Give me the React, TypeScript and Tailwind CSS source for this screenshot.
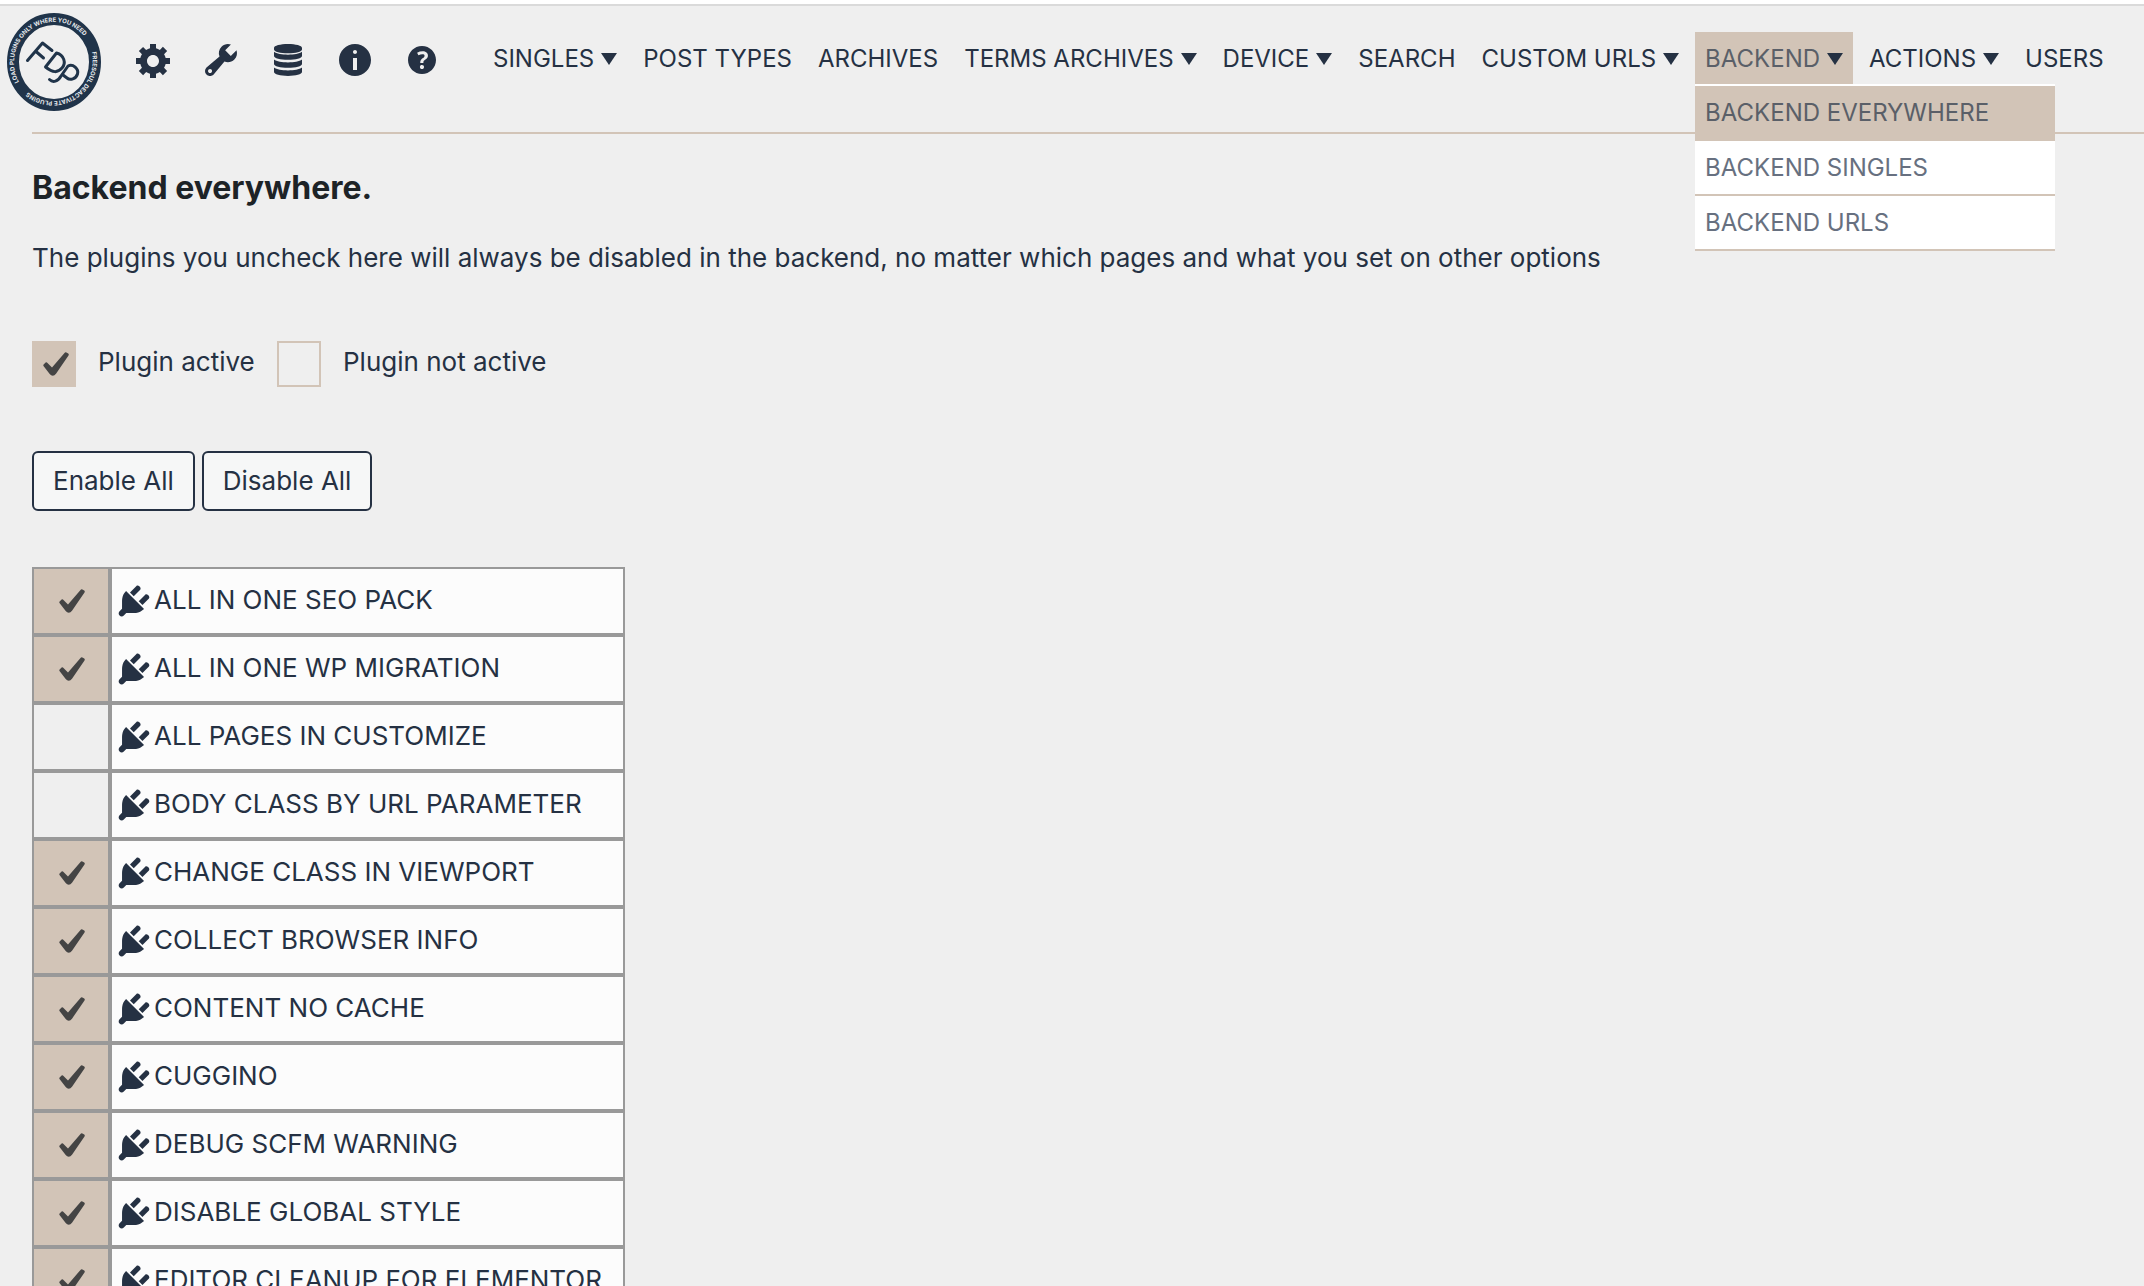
import React, { useState } from 'react';

interface IconProps {
  className?: string;
}

interface NavItem {
  label: string;
  hasMenu?: boolean;
  active?: boolean;
}

interface Plugin {
  name: string;
  enabled: boolean;
}

const navItems: NavItem[] = [
  { label: 'SINGLES', hasMenu: true },
  { label: 'POST TYPES' },
  { label: 'ARCHIVES' },
  { label: 'TERMS ARCHIVES', hasMenu: true },
  { label: 'DEVICE', hasMenu: true },
  { label: 'SEARCH' },
  { label: 'CUSTOM URLS', hasMenu: true },
  { label: 'BACKEND', hasMenu: true, active: true },
  { label: 'ACTIONS', hasMenu: true },
  { label: 'USERS' },
];

const backendMenu = ['BACKEND EVERYWHERE', 'BACKEND SINGLES', 'BACKEND URLS'];

const initialPlugins: Plugin[] = [
  { name: 'ALL IN ONE SEO PACK', enabled: true },
  { name: 'ALL IN ONE WP MIGRATION', enabled: true },
  { name: 'ALL PAGES IN CUSTOMIZE', enabled: false },
  { name: 'BODY CLASS BY URL PARAMETER', enabled: false },
  { name: 'CHANGE CLASS IN VIEWPORT', enabled: true },
  { name: 'COLLECT BROWSER INFO', enabled: true },
  { name: 'CONTENT NO CACHE', enabled: true },
  { name: 'CUGGINO', enabled: true },
  { name: 'DEBUG SCFM WARNING', enabled: true },
  { name: 'DISABLE GLOBAL STYLE', enabled: true },
  { name: 'EDITOR CLEANUP FOR ELEMENTOR', enabled: true },
];

const toolIcons = [
  {
    label: 'Settings',
    path: 'M18 12h-2.18c-.17.7-.44 1.35-.81 1.93l1.54 1.54-2.1 2.1-1.54-1.54c-.58.36-1.23.63-1.91.79V19H8v-2.18c-.68-.16-1.33-.43-1.91-.79l-1.54 1.54-2.12-2.12 1.54-1.54c-.36-.58-.63-1.23-.79-1.91H1V9.03h2.17c.16-.7.44-1.35.8-1.94L2.43 5.55l2.1-2.1 1.54 1.54c.58-.37 1.24-.64 1.93-.81V2h3v2.18c.68.16 1.33.43 1.91.79l1.54-1.54 2.12 2.12-1.54 1.54c.36.59.64 1.24.8 1.94H18V12zm-8.5 1.5c1.66 0 3-1.34 3-3s-1.34-3-3-3-3 1.34-3 3 1.34 3 3 3z',
  },
  {
    label: 'Tools',
    path: 'M16.68 9.77c-1.34 1.34-3.3 1.67-4.95.99l-5.41 6.52c-.99.99-2.59.99-3.58 0s-.99-2.59 0-3.57l6.52-5.42c-.68-1.65-.35-3.61.99-4.95 1.28-1.28 3.12-1.62 4.72-1.06l-2.89 2.89 2.82 2.82 2.86-2.87c.53 1.58.18 3.39-1.08 4.65zM3.81 16.21c.4.39 1.04.39 1.43 0 .4-.4.4-1.04 0-1.43-.39-.4-1.03-.4-1.43 0-.39.39-.39 1.03 0 1.43z',
  },
  {
    label: 'Database',
    path: 'M10 2c3.9 0 7 .85 7 1.95v.75C17 5.8 13.9 6.65 10 6.65S3 5.8 3 4.7v-.75C3 2.85 6.1 2 10 2zM3 5.9c1.3.95 4 1.45 7 1.45s5.7-.5 7-1.45V8c0 1.1-3.1 1.9-7 1.9S3 9.1 3 8zM3 9.8c1.3.95 4 1.45 7 1.45s5.7-.5 7-1.45V12c0 1.1-3.1 1.9-7 1.9S3 13.1 3 12zM3 13.8c1.3.95 4 1.45 7 1.45s5.7-.5 7-1.45v2.25C17 17.15 13.9 18 10 18s-7-.85-7-1.95z',
  },
  {
    label: 'Info',
    path: 'M10 2c4.42 0 8 3.58 8 8s-3.58 8-8 8-8-3.58-8-8 3.58-8 8-8zm1 4c0-.55-.45-1-1-1s-1 .45-1 1 .45 1 1 1 1-.45 1-1zm0 9V9H9v6h2z',
  },
  {
    label: 'Help',
    path: 'M17 10c0-3.87-3.14-7-7-7-3.87 0-7 3.13-7 7s3.13 7 7 7c3.86 0 7-3.13 7-7zm-6.3 1.48H9.14v-.43c0-.38.08-.7.24-.98s.46-.57.88-.89c.41-.29.68-.53.81-.71.14-.18.2-.39.2-.62 0-.25-.09-.44-.28-.58-.19-.13-.45-.19-.79-.19-.58 0-1.25.19-2 .57l-.64-1.28c.87-.49 1.8-.74 2.77-.74.81 0 1.45.2 1.92.58.48.39.71.91.71 1.55 0 .43-.09.8-.29 1.11-.19.32-.57.67-1.11 1.06-.38.28-.61.49-.71.63-.1.15-.15.34-.15.57v.35zm-1.47 2.74c-.18-.17-.27-.42-.27-.73 0-.33.08-.58.26-.75s.43-.25.77-.25c.32 0 .57.09.75.26s.27.42.27.74c0 .3-.09.55-.27.72-.18.18-.43.27-.75.27-.33 0-.58-.09-.76-.26z',
  },
];

const PlugIcon: React.FC<IconProps> = ({ className = '' }) => (
  <svg className={className} viewBox="0 0 20 20" fill="currentColor" aria-hidden="true">
    <path d="M13.11 4.36L9.87 7.6 8 5.73l3.24-3.24c.35-.34 1.05-.2 1.56.32.52.51.66 1.21.31 1.55zm-8 1.77l.91-1.12 9.01 9.01-1.19.84c-.71.71-2.63 1.16-3.82 1.16H6.14L4.9 17.26c-.59.59-1.54.59-2.12 0-.59-.58-.59-1.53 0-2.12l1.24-1.24v-3.88c0-1.13.4-3.19 1.09-3.89zm7.26 3.97l3.24-3.24c.34-.35 1.04-.21 1.55.31.52.51.66 1.21.31 1.55l-3.24 3.25z" />
  </svg>
);

const CheckMark: React.FC<IconProps> = ({ className = '' }) => (
  <svg className={className} viewBox="0 0 26 24" fill="#444" aria-hidden="true">
    <path d="M.6 12.4 2.6 10.6Q3.6 10 4.5 10.9L9 15.4 21.5.9Q22.4 0 23.4.6L25.2 1.6Q26.2 2.3 25.5 3.4L13 21.7Q11.5 23.8 9.8 23.8T6.7 22L.5 13.9Q0 13.1.6 12.4z" />
  </svg>
);

const Caret: React.FC = () => (
  <svg className="h-3 w-4" viewBox="0 0 16 12" fill="#253143" aria-hidden="true">
    <path d="M0 0h16L8 12z" />
  </svg>
);

const Logo: React.FC = () => (
  <svg className="h-[98px] w-[94px] shrink-0" viewBox="0 0 94 98" role="img" aria-label="FDP">
    <defs>
      <path id="ring-top" d="M12 69A40 40 0 0 1 7 49A40 41 0 0 1 83 32" />
      <path id="ring-bottom" d="M85 39A40 41 0 0 1 14 72" />
    </defs>
    <ellipse cx="47" cy="49" rx="41" ry="43" fill="none" stroke="#20344a" strokeWidth="12" />
    <g fill="#e8ebee" fontFamily="Inter, sans-serif" fontSize="6" fontWeight="700">
      <text>
        <textPath href="#ring-top">LOAD PLUGINS ONLY WHERE YOU NEED</textPath>
      </text>
      <text>
        <textPath href="#ring-bottom">FREESOUL DEACTIVATE PLUGINS</textPath>
      </text>
    </g>
    <g fill="none" stroke="#20344a" strokeWidth="3" strokeLinecap="round" strokeLinejoin="round">
      <path d="M20.5 47.5 35.5 30 45 37.5M29 38.5 36.5 45" />
      <path d="M38.5 54 49.5 40C57 42 59.5 50 55 55S46 60 38.5 54" />
      <path d="M42.5 66.5C46 70 51 68.5 54 63L61 53C66 50.500 72 56 70.500 61S63 67.500 60 65L56 62" />
    </g>
  </svg>
);

const App: React.FC = () => {
  const [plugins, setPlugins] = useState<Plugin[]>(initialPlugins);

  const setAll = (enabled: boolean) => {
    setPlugins(plugins.map((plugin) => ({ ...plugin, enabled })));
  };

  const toggle = (name: string) => {
    setPlugins(plugins.map((plugin) => (plugin.name === name ? { ...plugin, enabled: !plugin.enabled } : plugin)));
  };

  return (
    <div className="h-screen overflow-hidden border-t-4 border-white bg-[#efefef] font-['Inter',sans-serif] text-[26px] leading-8 text-[#253143]">
      <header className="flex h-[128px] items-start border-t-2 border-[#dadada] pl-[7px]">
        <a href="#home" className="mt-[7px]">
          <Logo />
        </a>

        {/* Tools */}
        <div className="mt-[34px] ml-[33px] flex gap-[27px]">
          {toolIcons.map((icon) => (
            <a key={icon.label} href="#tools" aria-label={icon.label}>
              <svg className="size-10" viewBox="0 0 20 20" fill="currentColor">
                <path d={icon.path} />
              </svg>
            </a>
          ))}
        </div>

        {/* Main navigation */}
        <nav className="mt-[26px] ml-[41px] flex gap-[6px] text-2xl">
          {navItems.map((item) => (
            <div key={item.label} className="relative">
              <a
                href="#section"
                className={`flex h-[52px] items-center gap-[7px] px-[10px] pt-[2px] whitespace-nowrap ${
                  item.active ? 'bg-[#d2c4b7] text-[#5a5f68]' : ''
                }`}
              >
                {item.label}
                {item.hasMenu && <Caret />}
              </a>

              {item.active && (
                <ul className="absolute top-full left-0 z-10 w-[360px] border-t-2 border-white bg-white">
                  {backendMenu.map((entry, index) => (
                    <li key={entry} className="border-b-2 border-[#d2c4b7]">
                      <a
                        href="#backend"
                        className={`flex h-[53px] items-center px-[10px] ${
                          index === 0 ? 'bg-[#d2c4b7] text-[#5a5f68]' : 'text-[#677080]'
                        }`}
                      >
                        {entry}
                      </a>
                    </li>
                  ))}
                </ul>
              )}
            </div>
          ))}
        </nav>
      </header>

      <main className="ml-8 border-t-2 border-[#d2c4b7] pt-[34px]">
        <h1 className="text-[32px] leading-10 font-bold text-[#1d2327]">Backend everywhere.</h1>
        <p className="mt-[34px]">
          The plugins you uncheck here will always be disabled in the backend, no matter which pages and what you set on other options
        </p>

        {/* Legend */}
        <div className="mt-[67px] flex">
          <span className="flex h-[46px] w-11 items-center justify-center bg-[#d2c4b7] pl-1">
            <CheckMark className="h-6 w-[26px]" />
          </span>
          <span className="mt-[5px] ml-[22px] w-[179px]">Plugin active</span>
          <span className="h-[46px] w-11 border-2 border-[#d2c4b7]" />
          <span className="mt-[5px] ml-[22px]">Plugin not active</span>
        </div>

        <div className="mt-16 flex gap-[7px]">
          <button
            type="button"
            className="h-[60px] rounded-md border-2 border-[#253143] bg-[#f6f7f7] px-[19px]"
            onClick={() => setAll(true)}
          >
            Enable All
          </button>
          <button
            type="button"
            className="h-[60px] rounded-md border-2 border-[#253143] bg-[#f6f7f7] px-[19px]"
            onClick={() => setAll(false)}
          >
            Disable All
          </button>
        </div>

        {/* Plugin list */}
        <table className="mt-14 border-separate border-spacing-0">
          <tbody>
            {plugins.map((plugin, index) => (
              <tr key={plugin.name} className="h-[68px]">
                <td className={`w-[78px] border-2 border-[#999] p-0 ${plugin.enabled ? 'bg-[#d2c4b7]' : ''}`}>
                  <label htmlFor={`plugin-${index}`} className="relative flex items-center justify-center pl-[2px]">
                    <input
                      id={`plugin-${index}`}
                      type="checkbox"
                      className="absolute size-full appearance-none"
                      checked={plugin.enabled}
                      onChange={() => toggle(plugin.name)}
                      aria-label={plugin.name}
                    />
                    {plugin.enabled && <CheckMark className="h-6 w-[26px]" />}
                  </label>
                </td>
                <td className="w-[515px] border-2 border-[#999] bg-[#fcfcfc] p-0">
                  <div className="flex items-center pl-[2px]">
                    <PlugIcon className="size-10" />
                    <span className="pb-[2px] whitespace-nowrap">{plugin.name}</span>
                  </div>
                </td>
              </tr>
            ))}
          </tbody>
        </table>
      </main>
    </div>
  );
};

export default App;
